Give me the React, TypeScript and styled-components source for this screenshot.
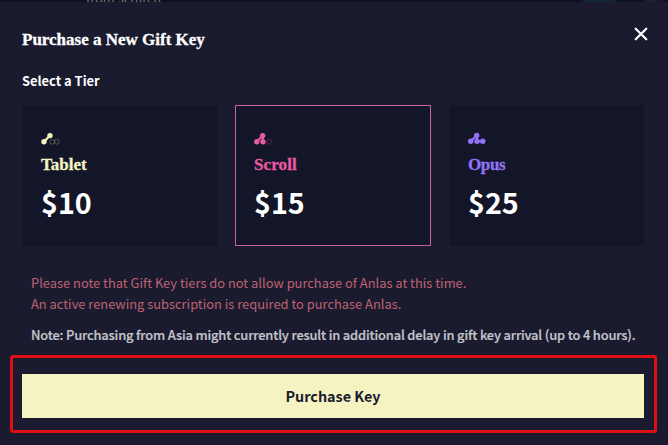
import React from "react";
import styled, { createGlobalStyle } from "styled-components";

const sans = `"Noto Sans CJK JP", "Noto Sans", sans-serif`;
const serif = `"Liberation Serif", serif`;

const GlobalStyle = createGlobalStyle`
  *, *::before, *::after { box-sizing: border-box; }
  html, body { margin: 0; background: #1b1b2f; }
  body { overflow: hidden; font-family: ${sans}; color: #fff; }
`;

const Page = styled.main`
  position: relative;
  width: 668px;
  height: 445px;
  overflow: hidden;
  background: #1b1b2f;
`;

const Backdrop = styled.div`
  height: 2px;
  overflow: hidden;
  padding-left: 86px;
  display: flex;
  align-items: flex-end;
  background: linear-gradient(90deg, #10101f 0 580px, #12263a 586px 612px, #10101f 620px 640px, #232136 650px, #10101f);
  color: #73737d;
  font-size: 12.9px;
  line-height: 8px;
`;

const Modal = styled.section`
  padding: 20px 24px 0 22px;
`;

const Header = styled.header`
  display: flex;
  justify-content: space-between;
  height: 46px;
`;

const Title = styled.h1`
  margin: 6px 0 0;
  font: 700 17px/24px ${serif};
  -webkit-text-stroke: 0.3px currentColor;
  white-space: nowrap;
`;

const CloseButton = styled.button`
  width: 14px;
  height: 14px;
  margin: 5px -4px 0 0;
  padding: 0;
  border: 0;
  background: none;
  color: #fff;
  svg { display: block; }
`;

const Subtitle = styled.h2`
  margin: 0;
  height: 37px;
  font: 700 12.9px/26px ${sans};
`;

const Tiers = styled.div`
  display: grid;
  grid-template-columns: 195px 196px 195px;
  gap: 18px;
`;

const TierCard = styled.article<{ $selected?: boolean }>`
  height: 141px;
  padding: 26px 18px 0;
  border: 1px solid ${(p) => (p.$selected ? "#c960a3" : "#131528")};
  background: #131528;
`;

const TierIcon = styled.svg`
  display: block;
  width: 20px;
  height: 14px;
`;

const TierName = styled.h3<{ $color: string; $spacing: number }>`
  margin: 7px 0 0;
  color: ${(p) => p.$color};
  font: 700 17px/24px ${serif};
  letter-spacing: ${(p) => p.$spacing}px;
  -webkit-text-stroke: 0.3px currentColor;
`;

const Price = styled.div`
  margin-top: 5px;
  font: 700 28.7px/40px ${sans};
`;

const Notes = styled.div`
  height: 128px;
  padding: 26px 0 0 9px;
  white-space: nowrap;
`;

const Warning = styled.p`
  margin: 0;
  color: #be6270;
  font-size: 12.88px;
  line-height: 21px;
`;

const DelayNote = styled.p`
  margin: 10px 0 0;
  color: #c4c4cc;
  font-size: 12.9px;
  font-weight: 500;
  letter-spacing: -0.166px;
  line-height: 21px;
  -webkit-text-stroke: 0.2px currentColor;
`;

const PurchaseButton = styled.button`
  display: block;
  width: 100%;
  height: 44px;
  padding: 0;
  border: 0;
  background: #f5f3c2;
  color: #1b1b2f;
  font: 700 14.4px/44px ${sans};
`;

const Highlight = styled.div`
  position: absolute;
  left: 10px;
  top: 355px;
  width: 647px;
  height: 78px;
  border: 3px solid #df1014;
  border-radius: 3px;
  pointer-events: none;
`;

type Point = [number, number];
type Tier = { name: string; price: string; color: string; spacing: number; filled: Point[]; hollow: Point[] };

const tiers: Tier[] = [
  { name: "Tablet", price: "$10", color: "#f5f3c2", spacing: 0, filled: [[3, 9.8], [9, 3.6]], hollow: [[11.2, 9.8], [15.8, 9.8]] },
  { name: "Scroll", price: "$15", color: "#e85aa5", spacing: 0.1, filled: [[2.7, 9.8], [8.7, 3.6], [9, 9.8]], hollow: [[15.2, 9.8]] },
  { name: "Opus", price: "$25", color: "#9472f5", spacing: -0.4, filled: [[2.7, 9.3], [8.7, 3.4], [9, 9.3], [14.8, 9.3]], hollow: [] },
];

function Constellation({ tier }: { tier: Tier }) {
  return (
    <TierIcon viewBox="0 0 20 14" fill={tier.color} stroke={tier.color}>
      <polyline points={tier.filled.map((p) => p.join(",")).join(" ")} fill="none" strokeWidth="2.2" />
      {tier.hollow.map(([x, y]) => (
        <circle key={x} cx={x} cy={y} r="2.4" fill="none" strokeWidth="0.6" opacity="0.45" />
      ))}
      {tier.filled.map(([x, y]) => (
        <circle key={`${x}-${y}`} cx={x} cy={y} r="2.7" stroke="none" />
      ))}
    </TierIcon>
  );
}

export default function App() {
  return (
    <>
      <GlobalStyle />
      <Page>
        <Backdrop>from scratch</Backdrop>
        <Modal>
          <Header>
            <Title>Purchase a New Gift Key</Title>
            <CloseButton aria-label="Close">
              <svg width="14" height="14" viewBox="0 0 14 14" stroke="currentColor" strokeWidth="2.2" strokeLinecap="round">
                <path d="M1.7 1.7 12.3 12.3M12.3 1.7 1.7 12.3" />
              </svg>
            </CloseButton>
          </Header>
          <Subtitle>Select a Tier</Subtitle>
          <Tiers>
            {tiers.map((tier) => (
              <TierCard key={tier.name} $selected={tier.name === "Scroll"}>
                <Constellation tier={tier} />
                <TierName $color={tier.color} $spacing={tier.spacing}>{tier.name}</TierName>
                <Price>{tier.price}</Price>
              </TierCard>
            ))}
          </Tiers>
          <Notes>
            <Warning>Please note that Gift Key tiers do not allow purchase of Anlas at this time.</Warning>
            <Warning>An active renewing subscription is required to purchase Anlas.</Warning>
            <DelayNote>Note: Purchasing from Asia might currently result in additional delay in gift key arrival (up to 4 hours).</DelayNote>
          </Notes>
          <PurchaseButton>Purchase Key</PurchaseButton>
        </Modal>
        <Highlight />
      </Page>
    </>
  );
}
